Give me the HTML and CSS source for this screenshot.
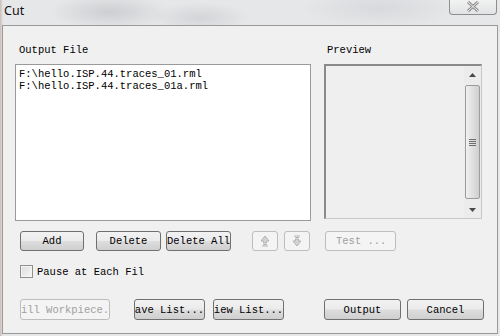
FILE: index.html
```html
<!DOCTYPE html>
<html lang="en">
<head>
    <meta charset="UTF-8">
    <title>Cut</title>
    <link rel="stylesheet" href="styles.css">
</head>
<body>
    <div class="window">
        <!-- Title bar -->
        <div class="titlebar">
            <span class="title">Cut</span>
            <div class="close-btn">
                <svg width="14" height="11" viewBox="0 0 14 11">
                    <path d="M2 1 L12 10 M12 1 L2 10" stroke="#8c8c8c" stroke-width="3" fill="none"/>
                    <path d="M2 1 L12 10 M12 1 L2 10" stroke="#f4f4f4" stroke-width="1" fill="none"/>
                </svg>
            </div>
        </div>

        <!-- Client area -->
        <div class="client">
            <div class="panes">
                <div class="pane-left">
                    <div class="label">Output File</div>
                    <div class="listbox">
                        <div class="list-item">F:\hello.ISP.44.traces_01.rml</div>
                        <div class="list-item">F:\hello.ISP.44.traces_01a.rml</div>
                    </div>
                </div>
                <div class="pane-right">
                    <div class="label label-preview">Preview</div>
                    <div class="preview">
                        <div class="scrollbar">
                            <div class="sb-arrow">
                                <svg width="7" height="4" viewBox="0 0 7 4"><path d="M0 4 L3.5 0 L7 4 Z" fill="#4a4a4a"/></svg>
                            </div>
                            <div class="sb-thumb">
                                <div class="grip"></div>
                                <div class="grip"></div>
                                <div class="grip"></div>
                                <div class="grip"></div>
                            </div>
                            <div class="sb-arrow">
                                <svg width="7" height="4" viewBox="0 0 7 4"><path d="M0 0 L3.5 4 L7 0 Z" fill="#4a4a4a"/></svg>
                            </div>
                        </div>
                    </div>
                </div>
            </div>

            <!-- List buttons -->
            <div class="btn-row row-list">
                <div class="btn btn-add">Add</div>
                <div class="btn btn-delete">Delete</div>
                <div class="btn btn-delall">Delete All</div>
                <div class="btn btn-arrow disabled">
                    <svg width="10" height="12" viewBox="0 0 10 12">
                        <path d="M5 1 L9 6 H6.5 V8 H3.5 V6 H1 Z" fill="#d4d4d4" stroke="#b4b4b4" stroke-width="1"/>
                        <path d="M2 11 H8 M3 9.5 H7" stroke="#b4b4b4" stroke-width="1"/>
                    </svg>
                </div>
                <div class="btn btn-arrow btn-down disabled">
                    <svg width="10" height="12" viewBox="0 0 10 12">
                        <path d="M5 11 L9 6 H6.5 V4 H3.5 V6 H1 Z" fill="#d4d4d4" stroke="#b4b4b4" stroke-width="1"/>
                        <path d="M2 1 H8 M3 2.5 H7" stroke="#b4b4b4" stroke-width="1"/>
                    </svg>
                </div>
                <div class="btn btn-test disabled flat">Test ...</div>
            </div>

            <label class="check-row">
                <span class="checkbox"></span>
                <span>Pause at Each Fil</span>
            </label>

            <!-- Bottom buttons -->
            <div class="btn-row row-bottom">
                <div class="btn btn-fill disabled flat">ill Workpiece.</div>
                <div class="btn btn-save">ave List...</div>
                <div class="btn btn-view">iew List...</div>
                <div class="btn btn-output">Output</div>
                <div class="btn btn-cancel">Cancel</div>
            </div>
        </div>
    </div>
</body>
</html>
```

FILE: styles.css
```css
/* Page */
body {
    margin: 0;
    width: 500px;
    height: 336px;
    overflow: hidden;
    font-family: 'Liberation Mono', 'Courier New', monospace;
    font-size: 10.5px;
    color: #000;
    background: linear-gradient(180deg, #eceef0 0%, #e4e6e8 30%, #dfe1e3 100%);
}

.window {
    width: 500px;
    height: 336px;
    background:
        radial-gradient(ellipse 60px 18px at 110px 12px, rgba(160, 160, 165, 0.35), transparent),
        radial-gradient(ellipse 50px 16px at 200px 18px, rgba(170, 170, 175, 0.3), transparent),
        radial-gradient(ellipse 80px 20px at 380px 8px, rgba(185, 185, 190, 0.3), transparent),
        linear-gradient(90deg, #c9bdb6 0px, #e6e7e9 3px);
}

/* Title bar */
.titlebar {
    height: 25px;
    display: flex;
    justify-content: space-between;
    align-items: flex-start;
}

.title {
    font-family: 'Noto Sans', 'Liberation Sans', sans-serif;
    font-size: 12.5px;
    margin: 2px 0 0 4px;
    color: #111;
}

.close-btn {
    width: 46px;
    height: 15px;
    margin: -1px 3px 0 0;
    border: 1px solid #8e8e8e;
    border-top: none;
    border-radius: 0 0 4px 4px;
    background: linear-gradient(180deg, #f3f3f3, #e2e3e5);
    display: flex;
    justify-content: center;
    align-items: center;
}

/* Client area */
.client {
    box-sizing: border-box;
    width: 496px;
    height: 309px;
    margin-left: 2px;
    border: 1px solid #9a9a9a;
    background-color: #f0f0f0;
    padding: 18px 0 0 12px;
}

.panes {
    display: flex;
    gap: 13px;
}

.label {
    height: 12px;
    line-height: 12px;
    padding-left: 4px;
    margin-bottom: 8px;
}

.label-preview {
    padding-left: 3px;
}

.listbox {
    box-sizing: border-box;
    width: 296px;
    height: 157px;
    border: 1px solid #9a9a9a;
    background-color: #fff;
    padding: 3px 3px;
}

.list-item {
    height: 12px;
    line-height: 12px;
    white-space: nowrap;
}

/* Preview box with scrollbar */
.preview {
    box-sizing: border-box;
    width: 158px;
    height: 155px;
    border: 1px solid #c8c8c8;
    border-top: 2px solid #8a8a8a;
    border-left: 2px solid #8a8a8a;
    background-color: #efefef;
    display: flex;
    justify-content: flex-end;
}

.scrollbar {
    width: 17px;
    display: flex;
    flex-direction: column;
    background-color: #ececec;
}

.sb-arrow {
    height: 17px;
    display: flex;
    justify-content: center;
    align-items: center;
}

.sb-thumb {
    flex: 1;
    margin: 2px 1px;
    border: 1px solid #9c9c9c;
    border-radius: 2px;
    background: linear-gradient(90deg, #f1f1f1, #dcdcdc 60%, #cfcfcf);
    display: flex;
    flex-direction: column;
    justify-content: center;
    align-items: center;
    gap: 1px;
}

.grip {
    width: 7px;
    height: 1px;
    background-color: #6e6e6e;
}

/* Buttons */
.btn-row {
    display: flex;
    align-items: center;
}

.row-list {
    margin-top: 10px;
    padding-left: 5px;
}

.row-bottom {
    margin-top: 21px;
    padding-left: 5px;
}

.btn {
    box-sizing: border-box;
    height: 20px;
    border: 1px solid #707070;
    border-radius: 3px;
    background: linear-gradient(180deg, #f2f2f2 0%, #ebebeb 48%, #dddddd 52%, #cfcfcf 100%);
    display: flex;
    justify-content: center;
    align-items: center;
    white-space: nowrap;
    overflow: hidden;
}

.btn.disabled {
    border-color: #bdbdbd;
    color: #a0a0a0;
    background: #f4f4f4;
}

.btn-add { width: 64px; }
.btn-delete { width: 65px; margin-left: 12px; }
.btn-delall { width: 65px; margin-left: 5px; }
.btn-arrow { width: 26px; margin-left: 21px; }
.btn-down { margin-left: 6px; }
.btn-test { width: 71px; margin-left: 15px; justify-content: flex-start; padding-left: 10px; }

.btn-fill { width: 90px; height: 21px; }
.btn-save { width: 71px; height: 21px; margin-left: 24px; }
.btn-view { width: 71px; height: 21px; margin-left: 8px; }
.btn-output { width: 77px; height: 21px; margin-left: 40px; }
.btn-cancel { width: 77px; height: 21px; margin-left: 6px; }

/* Checkbox */
.check-row {
    display: flex;
    align-items: center;
    gap: 4px;
    margin: 14px 0 0 5px;
}

.checkbox {
    box-sizing: border-box;
    width: 13px;
    height: 13px;
    border: 1px solid #8e8f8f;
    background: linear-gradient(135deg, #dcdcdc, #f6f6f6);
    box-shadow: inset 0 0 0 1px #f4f4f4;
}
```
